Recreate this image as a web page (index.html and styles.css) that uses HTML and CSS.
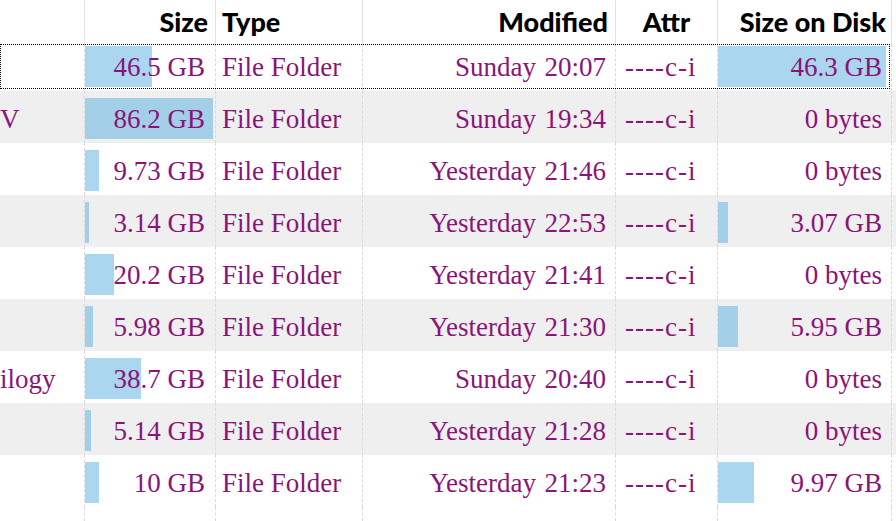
FILE: index.html
```html
<!DOCTYPE html>
<html>
<head>
<meta charset="utf-8">
<link rel="stylesheet" href="styles.css">
</head>
<body>
<div class="table">
  <div class="head">
    <div class="c"></div>
    <div class="c r hs">Size</div>
    <div class="c ht">Type</div>
    <div class="c r hm">Modified</div>
    <div class="c ha">Attr</div>
    <div class="c r hd">Size on Disk</div>
  </div>

  <div class="row first">
    <div class="c name"></div>
    <div class="c r size bar" style="--w:67px">46.5 GB</div>
    <div class="c type">File Folder</div>
    <div class="c mod"><span class="day">Sunday</span><span class="time">20:07</span></div>
    <div class="c attr">----c-i</div>
    <div class="c r disk bar" style="--w:168px">46.3 GB</div>
  </div>

  <div class="row alt">
    <div class="c name">V</div>
    <div class="c r size bar" style="--w:128px">86.2 GB</div>
    <div class="c type">File Folder</div>
    <div class="c mod"><span class="day">Sunday</span><span class="time">19:34</span></div>
    <div class="c attr">----c-i</div>
    <div class="c r disk">0 bytes</div>
  </div>

  <div class="row">
    <div class="c name"></div>
    <div class="c r size bar" style="--w:14px">9.73 GB</div>
    <div class="c type">File Folder</div>
    <div class="c mod"><span class="day">Yesterday</span><span class="time">21:46</span></div>
    <div class="c attr">----c-i</div>
    <div class="c r disk">0 bytes</div>
  </div>

  <div class="row alt">
    <div class="c name"></div>
    <div class="c r size bar" style="--w:4px">3.14 GB</div>
    <div class="c type">File Folder</div>
    <div class="c mod"><span class="day">Yesterday</span><span class="time">22:53</span></div>
    <div class="c attr">----c-i</div>
    <div class="c r disk bar" style="--w:10px">3.07 GB</div>
  </div>

  <div class="row">
    <div class="c name"></div>
    <div class="c r size bar" style="--w:29px">20.2 GB</div>
    <div class="c type">File Folder</div>
    <div class="c mod"><span class="day">Yesterday</span><span class="time">21:41</span></div>
    <div class="c attr">----c-i</div>
    <div class="c r disk">0 bytes</div>
  </div>

  <div class="row alt">
    <div class="c name"></div>
    <div class="c r size bar" style="--w:8px">5.98 GB</div>
    <div class="c type">File Folder</div>
    <div class="c mod"><span class="day">Yesterday</span><span class="time">21:30</span></div>
    <div class="c attr">----c-i</div>
    <div class="c r disk bar" style="--w:20px">5.95 GB</div>
  </div>

  <div class="row">
    <div class="c name">ilogy</div>
    <div class="c r size bar" style="--w:56px">38.7 GB</div>
    <div class="c type">File Folder</div>
    <div class="c mod"><span class="day">Sunday</span><span class="time">20:40</span></div>
    <div class="c attr">----c-i</div>
    <div class="c r disk">0 bytes</div>
  </div>

  <div class="row alt">
    <div class="c name"></div>
    <div class="c r size bar" style="--w:6px">5.14 GB</div>
    <div class="c type">File Folder</div>
    <div class="c mod"><span class="day">Yesterday</span><span class="time">21:28</span></div>
    <div class="c attr">----c-i</div>
    <div class="c r disk">0 bytes</div>
  </div>

  <div class="row">
    <div class="c name"></div>
    <div class="c r size bar" style="--w:14px">10 GB</div>
    <div class="c type">File Folder</div>
    <div class="c mod"><span class="day">Yesterday</span><span class="time">21:23</span></div>
    <div class="c attr">----c-i</div>
    <div class="c r disk bar" style="--w:36px">9.97 GB</div>
  </div>

  <div class="row fill">
    <div class="c"></div>
    <div class="c"></div>
    <div class="c"></div>
    <div class="c"></div>
    <div class="c"></div>
    <div class="c"></div>
  </div>
</div>
</body>
</html>
```

FILE: styles.css
```css
html, body {
  margin: 0;
  padding: 0;
  background: #ffffff;
}

body {
  width: 896px;
  height: 521px;
  overflow: hidden;
  font-family: "Liberation Serif", serif;
  color: #8a1479;
}

.table {
  display: flex;
  flex-direction: column;
  height: 521px;
}

.head,
.row {
  display: grid;
  grid-template-columns: 85px 131px 147px 253px 102px 174px 1fr;
  flex: none;
}

.c {
  box-sizing: border-box;
  white-space: nowrap;
  overflow: hidden;
}

.head {
  height: 44px;
  font-family: "Lato", sans-serif;
  font-weight: 900;
  font-size: 27px;
  line-height: 34px;
  color: #000;
}

.head .c {
  border-right: 1px solid #e3e3e3;
  padding-top: 5px;
}

.r { text-align: right; }

.hs { padding-right: 7px; }
.ht { padding-left: 6px; }
.hm { padding-right: 7px; }
.ha { text-align: center; }
.hd { padding-right: 5px; }

.row {
  height: 52px;
  font-size: 27px;
  line-height: 31px;
}

.row .c {
  border-right: 1px dashed #dadada;
  padding-top: 13px;
}

.row.alt {
  background: #efefef;
}

.row.first {
  height: 47px;
  position: relative;
}

.row.first .c {
  padding-top: 8px;
}

.row.first::after {
  content: "";
  position: absolute;
  left: 0;
  top: 0;
  width: 890px;
  height: 45px;
  box-sizing: border-box;
  border: 1px dotted #000;
  pointer-events: none;
}

.row.fill {
  flex: 1;
  height: auto;
}

.bar {
  background-image: linear-gradient(rgba(100, 180, 225, 0.55), rgba(100, 180, 225, 0.55));
  background-repeat: no-repeat;
  background-size: var(--w) 41px;
  background-position: 0 7px;
}

.row.first .bar {
  background-position: 0 2px;
}

.name { padding-left: 0; }

.size { padding-right: 10px; }

.type { padding-left: 6px; }

.mod {
  display: flex;
  justify-content: flex-end;
  padding-right: 9px;
}

.time {
  width: 70px;
  text-align: right;
}

.attr {
  padding-left: 9px;
  letter-spacing: 1px;
}

.disk { padding-right: 9px; }
```
